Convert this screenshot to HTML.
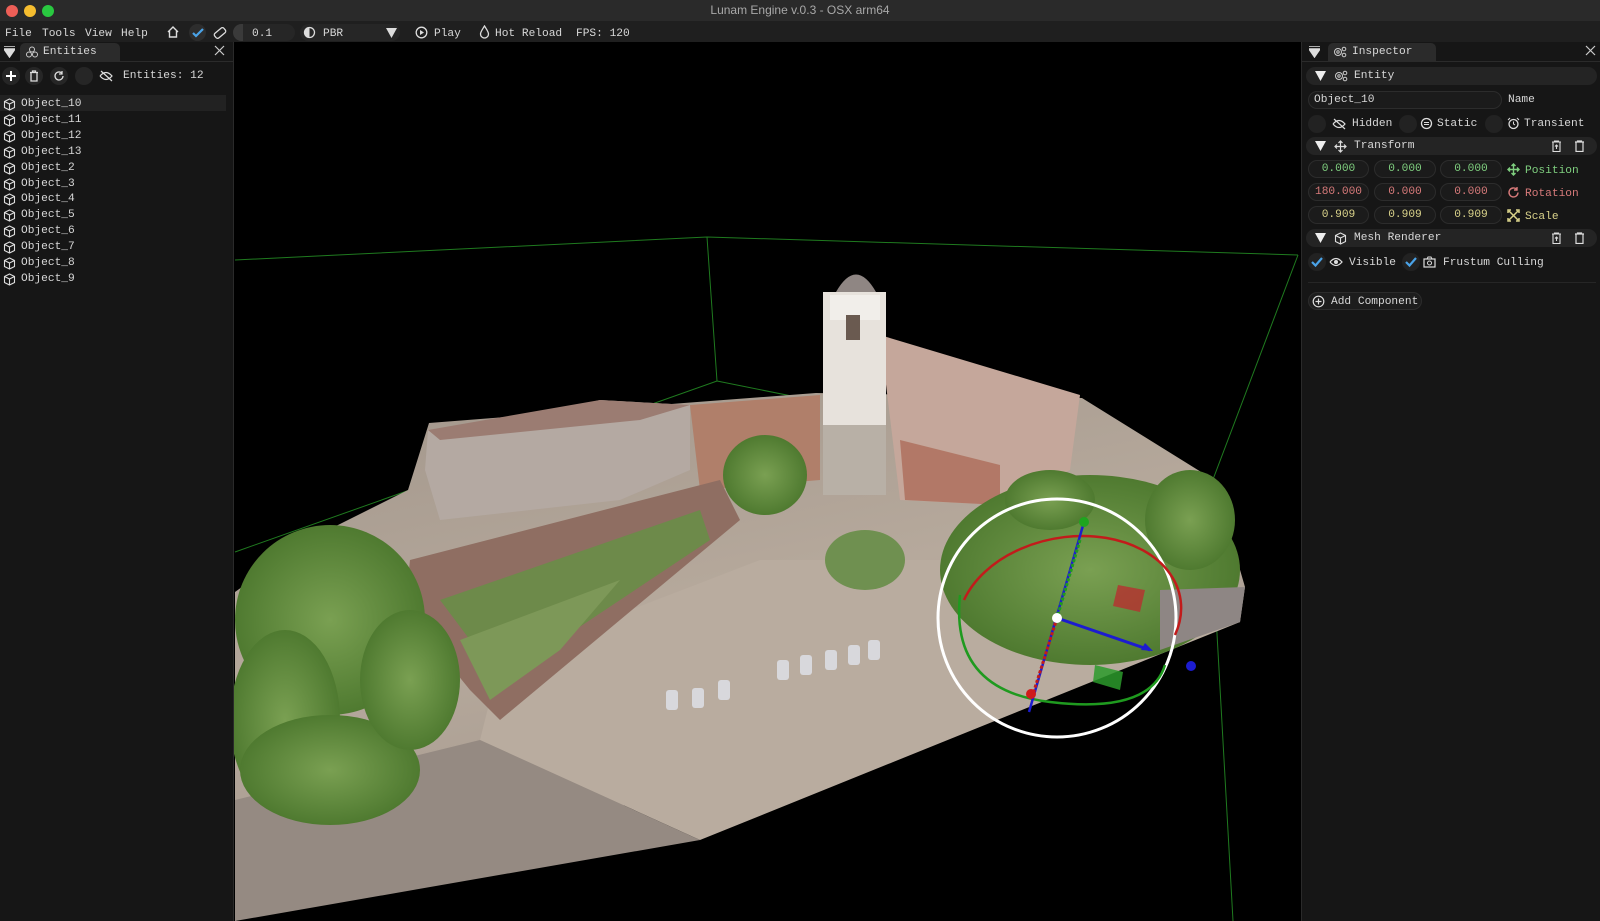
<!DOCTYPE html>
<html><head><meta charset="utf-8">
<style>
*{margin:0;padding:0;box-sizing:border-box}
body{width:1600px;height:921px;background:#000;overflow:hidden;position:relative;font-family:"Liberation Mono",monospace;font-size:11.2px;color:#d8d8d8}
.abs{position:absolute}
#title{left:0;top:0;width:1600px;height:21px;background:#2a2a2a;text-align:center;line-height:21px;color:#a8a8a8;font-family:"Liberation Sans",sans-serif;font-size:12px}
.dot{position:absolute;top:5px;width:12px;height:12px;border-radius:50%}
#menu{left:0;top:21px;width:1600px;height:21px;background:#1f1f1f;line-height:21px}
#menu span{position:absolute;top:3px}
#left{left:0;top:42px;width:234px;height:879px;background:#161616;border-right:1px solid #2a2a2a}
#right{left:1301px;top:42px;width:299px;height:879px;background:#161616;border-left:1px solid #2a2a2a}
.tab{position:absolute;top:1px;height:18px;background:#2b2b2b;border-radius:5px 5px 0 0;line-height:18px}
.item{position:absolute;left:21px}
.ic{position:absolute}
.hdr{position:absolute;left:4px;width:291px;height:18px;background:#242424;border-radius:9px;line-height:18px}
.fld{position:absolute;height:18px;background:#1b1b1b;border:1px solid #2c2c2c;border-radius:9px;line-height:16px;text-align:center}
.cb{position:absolute;width:18px;height:18px;border-radius:50%;background:#222}
.g{color:#7fcf7f}.r{color:#d77a7a}.y{color:#d9d28a}
</style></head><body>
<div id="title" class="abs">Lunam Engine v.0.3 - OSX arm64
<div class="dot" style="left:6px;background:#ee5f57"></div><div class="dot" style="left:24px;background:#f5bd2f"></div><div class="dot" style="left:42px;background:#29c840"></div></div>
<div id="menu" class="abs">
<span style="left:5px">File</span><span style="left:42px">Tools</span><span style="left:85px">View</span><span style="left:121px">Help</span>
<svg class="ic" style="left:166px;top:4px" width="14" height="14" viewBox="0 0 14 14"><path d="M2 7L7 2l5 5M3.5 6v6h7V6" stroke="#ddd" fill="none" stroke-width="1.4"/></svg>
<div class="ic" style="left:189px;top:3px;width:17px;height:17px;border-radius:50%;background:#2d2d2d"></div>
<svg class="ic" style="left:191px;top:5px" width="14" height="14" viewBox="0 0 14 14"><path d="M2 7l3 3 7-7" stroke="#4aa3e8" fill="none" stroke-width="2.2"/></svg>
<svg class="ic" style="left:213px;top:5px" width="14" height="14" viewBox="0 0 14 14"><rect x="1" y="4" width="12" height="6" rx="2" transform="rotate(-40 7 7)" stroke="#ddd" fill="none" stroke-width="1.3"/></svg>
<div class="ic" style="left:233px;top:3px;width:62px;height:17px;border-radius:9px;background:#262626"></div>
<div class="ic" style="left:233px;top:3px;width:10px;height:17px;border-radius:9px 0 0 9px;background:#3a3a3a"></div>
<span style="left:252px">0.1</span>
<div class="ic" style="left:300px;top:3px;width:100px;height:17px;border-radius:9px;background:#262626"></div>
<svg class="ic" style="left:303px;top:5px" width="13" height="13" viewBox="0 0 13 13"><circle cx="6.5" cy="6.5" r="5" stroke="#ddd" fill="none" stroke-width="1.3"/><path d="M6.5 1.5a5 5 0 0 0 0 10z" fill="#ddd"/></svg>
<span style="left:323px">PBR</span>
<svg class="ic" style="left:386px;top:7px" width="11" height="10"><path d="M0 0h11L5.5 10z" fill="#ddd"/></svg>
<svg class="ic" style="left:415px;top:5px" width="13" height="13" viewBox="0 0 13 13"><circle cx="6.5" cy="6.5" r="5.3" stroke="#ddd" fill="none" stroke-width="1.3"/><path d="M5 4l4 2.5L5 9z" fill="#ddd"/></svg>
<span style="left:434px">Play</span>
<svg class="ic" style="left:479px;top:4px" width="11" height="14" viewBox="0 0 11 14"><path d="M5.5 1C3 5 1.5 7 1.5 9a4 4 0 0 0 8 0c0-2-1.5-4-4-8z" stroke="#ddd" fill="none" stroke-width="1.3"/></svg>
<span style="left:495px">Hot Reload</span>
<span style="left:576px">FPS: 120</span>
</div>

<svg class="abs" style="left:0;top:0" width="1600" height="921" viewBox="0 0 1600 921">
<defs>
<linearGradient id="gr" x1="0" y1="0" x2="0.4" y2="1"><stop offset="0" stop-color="#a2968b"/><stop offset="0.5" stop-color="#b6a99c"/><stop offset="1" stop-color="#a0948a"/></linearGradient>
<radialGradient id="tr"><stop offset="0" stop-color="#7aa052"/><stop offset="1" stop-color="#4f7a30"/></radialGradient>
</defs>
<g stroke="#1f7a1f" stroke-width="1" fill="none">
<path d="M235 260L707 237L1298 255"/><path d="M707 237L717 381L235 552"/><path d="M717 381L1209 480"/><path d="M1298 255L1209 490L1233 921"/>
</g>
<polygon points="429,423 684,403 816,393 1082,398 1214,480 1245,587 1240,622 235,921 235,592 306,541 408,490" fill="url(#gr)"/>
<polygon points="500,660 760,560 1000,560 1240,622 700,840 480,740" fill="#b9ac9f"/>
<polygon points="235,921 235,800 480,740 700,840" fill="#958a82"/>
<polygon points="428,430 560,410 600,400 690,405 690,470 620,500 440,520 425,470" fill="#b4a9a2"/>
<polygon points="428,430 600,400 690,405 640,420 440,440" fill="#9b7c72"/>
<polygon points="690,405 820,395 820,480 700,490" fill="#b07f6a"/>
<polygon points="880,335 1080,395 1070,470 1000,505 900,500" fill="#c5a79b"/>
<polygon points="900,440 1000,465 1000,505 905,500" fill="#b27867"/>
<rect x="823" y="292" width="63" height="198" fill="#e7e2dc"/>
<rect x="830" y="295" width="50" height="25" fill="#f1eeea"/>
<path d="M836 292q20-35 40 0z" fill="#8f8683"/>
<rect x="846" y="315" width="14" height="25" fill="#6a5a50"/>
<rect x="823" y="425" width="63" height="70" fill="#b8b0a6"/>
<polygon points="410,560 720,480 740,520 500,720 470,690 405,610" fill="#8f6e62"/>
<polygon points="440,600 700,510 710,540 500,680" fill="#6d8a4a"/>
<polygon points="460,640 620,580 560,650 490,700" fill="#7d9858"/>
<ellipse cx="765" cy="475" rx="42" ry="40" fill="url(#tr)"/>
<ellipse cx="330" cy="620" rx="95" ry="95" fill="url(#tr)"/>
<ellipse cx="285" cy="720" rx="55" ry="90" fill="url(#tr)"/>
<ellipse cx="330" cy="770" rx="90" ry="55" fill="url(#tr)"/>
<ellipse cx="410" cy="680" rx="50" ry="70" fill="url(#tr)"/>
<ellipse cx="1090" cy="570" rx="150" ry="95" fill="url(#tr)"/>
<ellipse cx="1190" cy="520" rx="45" ry="50" fill="url(#tr)"/>
<ellipse cx="1050" cy="500" rx="45" ry="30" fill="url(#tr)"/>
<ellipse cx="865" cy="560" rx="40" ry="30" fill="#6f9050"/>
<polygon points="1160,590 1245,587 1240,622 1160,650" fill="#8e8684"/>
<g fill="#d8d8dc"><rect x="777" y="660" width="12" height="20" rx="3"/><rect x="800" y="655" width="12" height="20" rx="3"/><rect x="825" y="650" width="12" height="20" rx="3"/><rect x="848" y="645" width="12" height="20" rx="3"/><rect x="868" y="640" width="12" height="20" rx="3"/><rect x="666" y="690" width="12" height="20" rx="3"/><rect x="692" y="688" width="12" height="20" rx="3"/><rect x="718" y="680" width="12" height="20" rx="3"/></g>
<circle cx="1057" cy="618" r="119" stroke="#fff" stroke-width="3" fill="none"/>
<path d="M964 600A105 75 -10 0 1 1175 635" stroke="#c21b1b" stroke-width="2.5" fill="none"/>
<path d="M960 595Q950 690 1050 702T1165 665" stroke="#1f9a1f" stroke-width="2.5" fill="none"/>
<line x1="1084" y1="522" x2="1029" y2="712" stroke="#1c1cd0" stroke-width="2.5"/>
<line x1="1080" y1="540" x2="1057" y2="618" stroke="#1f9a1f" stroke-width="3" stroke-dasharray="3 2"/>
<line x1="1057" y1="618" x2="1033" y2="694" stroke="#c21b1b" stroke-width="3" stroke-dasharray="3 2"/>
<line x1="1057" y1="618" x2="1150" y2="650" stroke="#1c1cd0" stroke-width="3"/>
<path d="M1153 651l-12 -1 4 -7z" fill="#1c1cd0"/>
<circle cx="1084" cy="522" r="5" fill="#1fa51f"/><circle cx="1031" cy="694" r="5" fill="#d01b1b"/><circle cx="1191" cy="666" r="5" fill="#1c1cd0"/>
<circle cx="1057" cy="618" r="5" fill="#fff"/>
<polygon points="1118,585 1145,590 1140,612 1113,606" fill="#b83030" opacity="0.8"/>
<polygon points="1095,665 1123,672 1120,690 1093,682" fill="#2c9a2c" opacity="0.85"/>
</svg>

<div id="left" class="abs">
<svg class="ic" style="left:4px;top:4px" width="11" height="12"><path d="M0 0h11M0 3h11L5.5 11z" stroke="#ddd" fill="#ddd" stroke-width="1.4"/></svg>
<div class="tab" style="left:20px;width:100px"><span style="position:absolute;left:23px">Entities</span>
<svg class="ic" style="left:6px;top:3px" width="12" height="12" viewBox="0 0 12 12"><g stroke="#ccc" fill="none"><circle cx="6" cy="3.5" r="2.5"/><circle cx="3" cy="8.5" r="2.5"/><circle cx="9" cy="8.5" r="2.5"/></g></svg></div>
<svg class="ic" style="left:214px;top:3px" width="11" height="11"><path d="M1 1l9 9M10 1l-9 9" stroke="#ccc" stroke-width="1.2"/></svg>
<div style="position:absolute;left:0;top:19px;width:233px;height:1px;background:#2b2b2b"></div>
<div class="cb" style="left:2px;top:25px;background:#262626"></div><svg class="ic" style="left:5px;top:28px" width="12" height="12"><path d="M6 1v10M1 6h10" stroke="#fff" stroke-width="2"/></svg>
<div class="cb" style="left:25px;top:25px;background:#262626"></div><svg class="ic" style="left:28px;top:28px" width="12" height="12"><path d="M2 2.5h8M4.5 2.5V1h3v1.5M3 3v8h6V3" stroke="#ddd" fill="none" stroke-width="1.3"/></svg>
<div class="cb" style="left:50px;top:25px;background:#262626"></div><svg class="ic" style="left:53px;top:28px" width="12" height="12"><path d="M10 6a4 4 0 1 1-1.2-2.9M9 1v3H6" stroke="#ddd" fill="none" stroke-width="1.3"/></svg>
<div class="cb" style="left:75px;top:25px;background:#262626"></div>
<svg class="ic" style="left:99px;top:28px" width="14" height="12"><path d="M1 6q6-7 12 0q-6 7-12 0M2 1l11 10" stroke="#ddd" fill="none" stroke-width="1.2"/></svg>
<span style="position:absolute;left:123px;top:28px">Entities: 12</span>
<div style="position:absolute;left:0;top:53px;width:226px;height:16px;background:#222"></div>
<div id="list"></div>
</div>

<div id="right" class="abs">
<svg class="ic" style="left:7px;top:4px" width="11" height="12"><path d="M0 0h11M0 3h11L5.5 11z" stroke="#ddd" fill="#ddd" stroke-width="1.4"/></svg>
<div class="tab" style="left:26px;width:108px"><span style="position:absolute;left:24px">Inspector</span>
<svg class="ic" style="left:5px;top:3px" width="14" height="12" viewBox="0 0 14 12"><g stroke="#ccc" fill="none"><circle cx="5" cy="6" r="3.5"/><circle cx="5" cy="6" r="1.2"/><circle cx="11" cy="3" r="1.8"/><circle cx="11" cy="9" r="1.8"/></g></svg></div>
<svg class="ic" style="left:283px;top:3px" width="11" height="11"><path d="M1 1l9 9M10 1l-9 9" stroke="#ccc" stroke-width="1.2"/></svg>
<div style="position:absolute;left:0;top:19px;width:299px;height:1px;background:#2b2b2b"></div>

<div class="hdr" style="top:25px"><svg class="ic" style="left:9px;top:4px" width="11" height="10"><path d="M0 0h11L5.5 10z" fill="#eee"/></svg>
<svg class="ic" style="left:28px;top:3px" width="14" height="12" viewBox="0 0 14 12"><g stroke="#ccc" fill="none"><circle cx="5" cy="6" r="3.5"/><circle cx="5" cy="6" r="1.2"/><circle cx="11" cy="3" r="1.8"/><circle cx="11" cy="9" r="1.8"/></g></svg><span style="position:absolute;left:48px">Entity</span></div>
<div class="fld" style="left:6px;top:49px;width:194px;text-align:left;padding-left:5px">Object_10</div>
<span style="position:absolute;left:206px;top:52px">Name</span>
<div class="cb" style="left:6px;top:73px"></div>
<svg class="ic" style="left:30px;top:76px" width="14" height="12"><path d="M1 6q6-7 12 0q-6 7-12 0M2 1l11 10" stroke="#ddd" fill="none" stroke-width="1.2"/></svg>
<span style="position:absolute;left:50px;top:76px">Hidden</span>
<div class="cb" style="left:97px;top:73px"></div>
<svg class="ic" style="left:118px;top:75px" width="13" height="13"><circle cx="6.5" cy="6.5" r="5" stroke="#ddd" fill="none" stroke-width="1.3"/><path d="M4 5.5h5M4 7.5h5" stroke="#ddd"/></svg>
<span style="position:absolute;left:135px;top:76px">Static</span>
<div class="cb" style="left:183px;top:73px"></div>
<svg class="ic" style="left:205px;top:75px" width="13" height="13"><circle cx="6.5" cy="7" r="4.5" stroke="#ddd" fill="none" stroke-width="1.3"/><path d="M6.5 4.5v2.5l1.5 1M1 3l2-2M12 3l-2-2" stroke="#ddd" fill="none"/></svg>
<span style="position:absolute;left:222px;top:76px">Transient</span>

<div class="hdr" style="top:95px"><svg class="ic" style="left:9px;top:4px" width="11" height="10"><path d="M0 0h11L5.5 10z" fill="#eee"/></svg>
<svg class="ic" style="left:28px;top:3px" width="13" height="13"><path d="M6.5 1v11M1 6.5h11M4.5 3l2-2 2 2M4.5 10l2 2 2-2M3 4.5l-2 2 2 2M10 4.5l2 2-2 2" stroke="#ddd" fill="none" stroke-width="1.2"/></svg>
<span style="position:absolute;left:48px">Transform</span>
<svg class="ic" style="left:245px;top:3px" width="11" height="12"><path d="M1 2h9M3.5 2V1h4v1M2 2.5v9h7v-9M5.5 9V5M4 6.5l1.5-1.5 1.5 1.5" stroke="#ddd" fill="none" stroke-width="1.1"/></svg>
<svg class="ic" style="left:268px;top:3px" width="11" height="12"><path d="M1 2h9M3.5 2V1h4v1M2 2.5v9h7v-9" stroke="#ddd" fill="none" stroke-width="1.2"/></svg></div>

<div class="fld g" style="left:6px;top:118px;width:61px">0.000</div><div class="fld g" style="left:72px;top:118px;width:62px">0.000</div><div class="fld g" style="left:138px;top:118px;width:62px">0.000</div>
<svg class="ic" style="left:205px;top:121px" width="13" height="13"><path d="M6.5 1v11M1 6.5h11M4.5 3l2-2 2 2M4.5 10l2 2 2-2M3 4.5l-2 2 2 2M10 4.5l2 2-2 2" stroke="#7fcf7f" fill="none" stroke-width="1.4"/></svg>
<span class="g" style="position:absolute;left:223px;top:123px">Position</span>
<div class="fld r" style="left:6px;top:141px;width:61px">180.000</div><div class="fld r" style="left:72px;top:141px;width:62px">0.000</div><div class="fld r" style="left:138px;top:141px;width:62px">0.000</div>
<svg class="ic" style="left:205px;top:144px" width="13" height="13"><path d="M11 6.5a4.5 4.5 0 1 1-1.3-3.2M10 1v3H7" stroke="#d77a7a" fill="none" stroke-width="1.4"/></svg>
<span class="r" style="position:absolute;left:223px;top:146px">Rotation</span>
<div class="fld y" style="left:6px;top:164px;width:61px">0.909</div><div class="fld y" style="left:72px;top:164px;width:62px">0.909</div><div class="fld y" style="left:138px;top:164px;width:62px">0.909</div>
<svg class="ic" style="left:205px;top:167px" width="13" height="13"><path d="M2 2l9 9M11 2l-9 9M1 4V1h3M9 1h3v3M1 9v3h3M12 9v3H9" stroke="#d9d28a" fill="none" stroke-width="1.5"/></svg>
<span class="y" style="position:absolute;left:223px;top:169px">Scale</span>

<div class="hdr" style="top:187px"><svg class="ic" style="left:9px;top:4px" width="11" height="10"><path d="M0 0h11L5.5 10z" fill="#eee"/></svg>
<svg class="ic" style="left:28px;top:3px" width="13" height="13"><path d="M6.5 1l5 2.5v6l-5 2.5-5-2.5v-6zM1.5 3.5l5 2.5 5-2.5M6.5 6v6" stroke="#ddd" fill="none" stroke-width="1.1"/></svg>
<span style="position:absolute;left:48px">Mesh Renderer</span>
<svg class="ic" style="left:245px;top:3px" width="11" height="12"><path d="M1 2h9M3.5 2V1h4v1M2 2.5v9h7v-9M5.5 9V5M4 6.5l1.5-1.5 1.5 1.5" stroke="#ddd" fill="none" stroke-width="1.1"/></svg>
<svg class="ic" style="left:268px;top:3px" width="11" height="12"><path d="M1 2h9M3.5 2V1h4v1M2 2.5v9h7v-9" stroke="#ddd" fill="none" stroke-width="1.2"/></svg></div>
<div class="cb" style="left:6px;top:211px"></div><svg class="ic" style="left:9px;top:214px" width="12" height="12"><path d="M1 6l3.5 3.5L11 2" stroke="#4aa3e8" fill="none" stroke-width="2.2"/></svg>
<svg class="ic" style="left:27px;top:214px" width="14" height="12"><path d="M1 6q6-7 12 0q-6 7-12 0" stroke="#ddd" fill="none" stroke-width="1.3"/><circle cx="7" cy="6" r="2" fill="#ddd"/></svg>
<span style="position:absolute;left:47px;top:215px">Visible</span>
<div class="cb" style="left:100px;top:211px"></div><svg class="ic" style="left:103px;top:214px" width="12" height="12"><path d="M1 6l3.5 3.5L11 2" stroke="#4aa3e8" fill="none" stroke-width="2.2"/></svg>
<svg class="ic" style="left:121px;top:214px" width="13" height="12"><rect x="1" y="3" width="11" height="8" stroke="#ddd" fill="none" stroke-width="1.2"/><circle cx="6.5" cy="7" r="2" stroke="#ddd" fill="none"/><path d="M4 3l1-2h3l1 2" stroke="#ddd" fill="none"/></svg>
<span style="position:absolute;left:141px;top:215px">Frustum Culling</span>
<div style="position:absolute;left:6px;top:240px;width:288px;height:1px;background:#262626"></div>
<div class="fld" style="left:6px;top:250px;width:114px;background:#1d1d1d;text-align:left;padding-left:22px;line-height:18px">Add Component</div>
<svg class="ic" style="left:10px;top:253px" width="13" height="13"><circle cx="6.5" cy="6.5" r="5.3" stroke="#ddd" fill="none" stroke-width="1.2"/><path d="M6.5 3.5v6M3.5 6.5h6" stroke="#ddd" stroke-width="1.2"/></svg>
</div>
<script>
var n=["Object_10","Object_11","Object_12","Object_13","Object_2","Object_3","Object_4","Object_5","Object_6","Object_7","Object_8","Object_9"],h="";
n.forEach(function(s,i){var y=56+i*15.9;h+='<svg class="ic" style="left:3px;top:'+(y)+'px" width="13" height="13"><path d="M6.5 1l5 2.5v6l-5 2.5-5-2.5v-6zM1.5 3.5l5 2.5 5-2.5M6.5 6v6" stroke="#ddd" fill="none" stroke-width="1.1"/></svg><span class="item" style="top:'+y+'px">'+s+'</span>';});
document.getElementById("list").innerHTML=h;
</script>
</body></html>
